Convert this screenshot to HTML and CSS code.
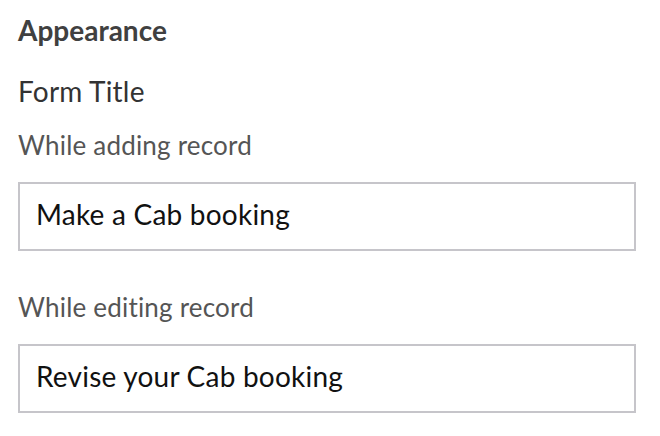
FILE: index.html
```html
<!DOCTYPE html>
<html>
<head>
<meta charset="utf-8">
<link rel="stylesheet" href="styles.css">
</head>
<body>
<div class="panel">
  <h2 class="section-title">Appearance</h2>
  <h3 class="group-title">Form Title</h3>
  <div class="field">
    <label class="field-label">While adding record</label>
    <div class="input">Make a Cab booking</div>
  </div>
  <div class="field">
    <label class="field-label">While editing record</label>
    <div class="input">Revise your Cab booking</div>
  </div>
</div>
</body>
</html>
```

FILE: styles.css
```css
html, body {
  margin: 0;
  padding: 0;
  background: #ffffff;
}
body {
  font-family: "Lato", "Liberation Sans", sans-serif;
}
.panel {
  padding: 13px 24px 0 18px;
}
.section-title {
  margin: 0;
  font-size: 28px;
  line-height: 34px;
  font-weight: 700;
  color: #404040;
}
.group-title {
  margin: 27px 0 0 0;
  font-size: 28px;
  line-height: 34px;
  font-weight: 400;
  color: #333333;
  letter-spacing: 0.2px;
}
.field {
  margin-top: 21px;
}
.field + .field {
  margin-top: 40px;
}
.field-label {
  display: block;
  font-size: 26px;
  line-height: 32px;
  color: #555555;
  letter-spacing: 0.2px;
}
.input {
  margin-top: 21px;
  height: 69px;
  box-sizing: border-box;
  border: 2px solid #c6c5ca;
  padding: 13px 16px 0 16px;
  font-size: 28px;
  line-height: 34px;
  color: #111111;
  letter-spacing: 0.22px;
}
```
